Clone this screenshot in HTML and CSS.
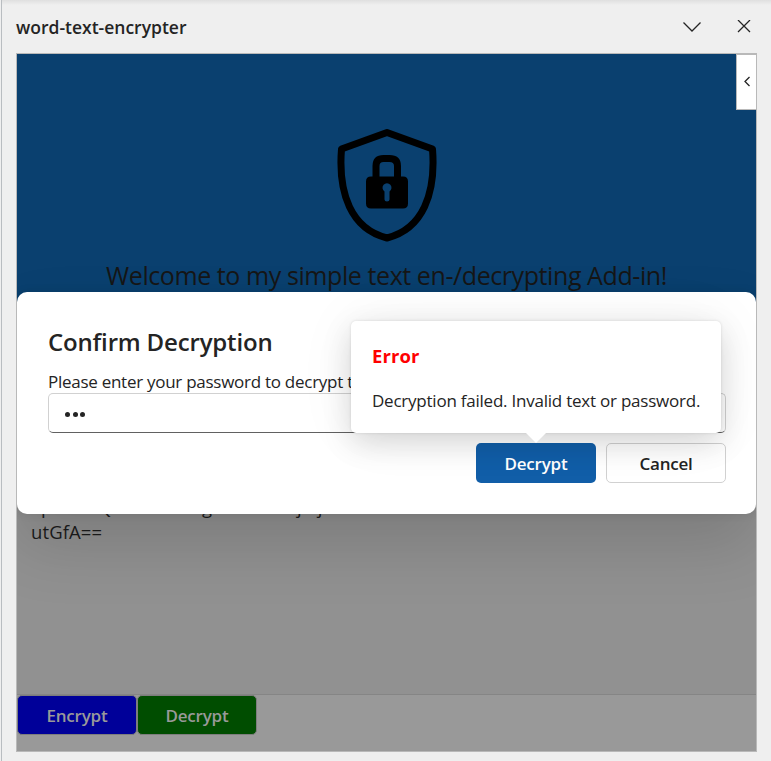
FILE: index.html
```html
<!DOCTYPE html>
<html lang="en">
<head>
<meta charset="utf-8">
<title>word-text-encrypter</title>
<link rel="stylesheet" href="styles.css">
</head>
<body>
<div class="pane">
  <header class="pane-header">
    <span class="pane-title">word-text-encrypter</span>
    <svg class="chevron" width="20" height="20" viewBox="0 0 20 20"><path d="M1.500 5.500l8.500 8.500 8.500-8.500"/></svg>
    <svg class="close" width="14" height="14" viewBox="0 0 14 14"><path d="M1 0l12 12M13 0L1 12"/></svg>
  </header>
  <main class="frame">
    <section class="hero">
      <svg class="shield" width="102" height="116" viewBox="0 0 102 116">
        <path class="outline" d="M51 5.500L96.500 22C100 66.500 87 102 51 111C15 102 2 66.500 5.500 22Z"/>
        <path class="shackle" d="M40 54V39Q40 31.500 47.500 31.500H53.500Q61.500 31.500 61.500 39V54"/>
        <path fill-rule="evenodd" d="M35 49.500H67Q72 49.500 72 54.500V76.500Q72 81.500 67 81.500H35Q30 81.500 30 76.500V54.500Q30 49.500 35 49.500ZM48.500 64.500V72.500Q48.500 74.500 51 74.500T53.500 72.500V64.500A4.500 4.500 0 1 0 48.500 64.500Z"/>
      </svg>
      <h1><span class="welcome">Welcome to my simple text en-/decrypting Add-in!</span></h1>
    </section>
    <section class="cipher">
      <div class="cipher-line">4pnVwnQwTxUwxVngnXTuvwVnjVtjnk</div>
      <div><span class="cipher-end">utGfA==</span></div>
    </section>
    <footer class="actions">
      <button class="encrypt"><span>Encrypt</span></button>
      <button class="decrypt"><span>Decrypt</span></button>
    </footer>
    <div class="overlay">
      <div class="dialog">
        <h2><span class="dialog-title">Confirm Decryption</span></h2>
        <label for="password">Please enter your password to decrypt t</label>
        <div class="field" id="password"><i></i><i></i><i></i></div>
        <div class="buttons">
          <div class="anchor">
            <button class="primary"><span>Decrypt</span></button>
            <div class="popover">
              <h3><span>Error</span></h3>
              <p><span class="message">Decryption failed. Invalid text or password.</span></p>
            </div>
          </div>
          <button class="secondary"><span>Cancel</span></button>
        </div>
      </div>
    </div>
    <button class="drawer" aria-label="Open"><svg width="8" height="12" viewBox="0 0 8 12"><path d="M6.500 1L2 5.500l4.500 4.500"/></svg></button>
  </main>
</div>
</body>
</html>
```
FILE: styles.css
```css
* { box-sizing: border-box; }
body { margin: 0; font-family: "Open Sans", "Noto Sans", sans-serif; color: #242424; background: #efefef; }
h1, h2, h3, p { margin: 0; font-weight: 400; }
button { font: inherit; padding: 0; }
.pane { height: 761px; margin-left: 1px; border-left: 1px solid #b9bdc1; padding: 0 14px; background: linear-gradient(#dfdfdf, #efefef 5px); }
.pane-header { height: 53px; display: flex; align-items: center; }
.pane-title { flex: 1; font-size: 17.500px; font-weight: 600; line-height: 24px; padding-top: 0; }
.pane-header svg, .drawer svg { fill: none; stroke: #242424; stroke-width: 1.300; }
.chevron { margin: 0 35px 0 0; }
.close { margin-right: 6px; }
.frame { position: relative; width: 741px; height: 699px; border: 1px solid #b9b9b9; background: #999; overflow: hidden; }
.hero { height: 290px; background: #0a406f; padding-top: 73px; text-align: center; }
.shield { display: block; margin: 0 auto; }
.outline, .shackle { fill: none; stroke: #000; stroke-width: 7; stroke-linejoin: round; }
h1 { font-size: 25px; line-height: 36px; letter-spacing: -.42px; margin-top: 14px; color: #161616; white-space: nowrap; }
.cipher { height: 351px; padding: 150px 14px 0; border-bottom: 1px solid #858585; background: #919191; font-size: 18.500px; line-height: 25px; color: #1c1c1c; }
.cipher-line { letter-spacing: -.5px; }
.cipher-end { letter-spacing: .1px; }
.actions { display: flex; gap: 0; }
.actions button { width: 120px; height: 40px; border: 1px solid #7d7d7d; border-radius: 5px; color: #999; font-size: 17px; font-weight: 600; letter-spacing: -.2px; }
.actions .encrypt { background: #000099; }
.actions .decrypt { background: #004d00; }
.overlay { position: absolute; top: 238px; left: 0; right: 0; }
.dialog { height: 222px; padding: 31px 30px 0 31px; border-radius: 10px; background: #fff; box-shadow: 0 0 10px rgba(0,0,0,.1), 0 32px 64px rgba(0,0,0,.14); }
h2 { font-size: 24px; font-weight: 600; line-height: 38px; letter-spacing: -.17px; }
label { display: block; height: 32px; padding-top: 9px; font-size: 17px; line-height: 24px; letter-spacing: -.27px; white-space: nowrap; }
.field { height: 40px; border: 1px solid #d1d1d1; border-bottom-color: #616161; border-radius: 5px; padding: 2px 0 0 16px; display: flex; align-items: center; gap: 2.500px; }
.field i { width: 5px; height: 5px; border-radius: 50%; background: #242424; }
.buttons { display: flex; justify-content: flex-end; gap: 10px; margin-top: 10px; }
.anchor { position: relative; }
.buttons button { display: block; width: 120px; height: 40px; border-radius: 5px; font-size: 17px; font-weight: 600; letter-spacing: -.2px; }
.primary { border: 0; background: #115ea8; color: #fff; }
.secondary { border: 1px solid #d1d1d1; background: transparent; color: #242424; }
.popover { position: absolute; left: -125px; bottom: 50px; width: 370px; height: 112px; padding: 22px 21px; border-radius: 5px; background: #fff; box-shadow: 0 0 3px rgba(0,0,0,.12), 0 10px 30px rgba(0,0,0,.14), 0 0 60px rgba(0,0,0,.06); }
.popover::after { content: ""; position: absolute; left: 175px; top: 112px; border: 10px solid transparent; border-top-color: #fff; border-bottom: 0; }
h3 { font-size: 18.500px; font-weight: 700; line-height: 26px; letter-spacing: .1px; color: #f00; }
.popover p { margin-top: 19px; font-size: 17px; line-height: 26px; letter-spacing: -.23px; white-space: nowrap; }
.drawer { position: absolute; top: 0; right: 0; width: 20px; height: 56px; border: 1px solid #b9b9b9; border-width: 1px 0 1px 1px; background: #fff; display: flex; align-items: center; justify-content: center; }
```
